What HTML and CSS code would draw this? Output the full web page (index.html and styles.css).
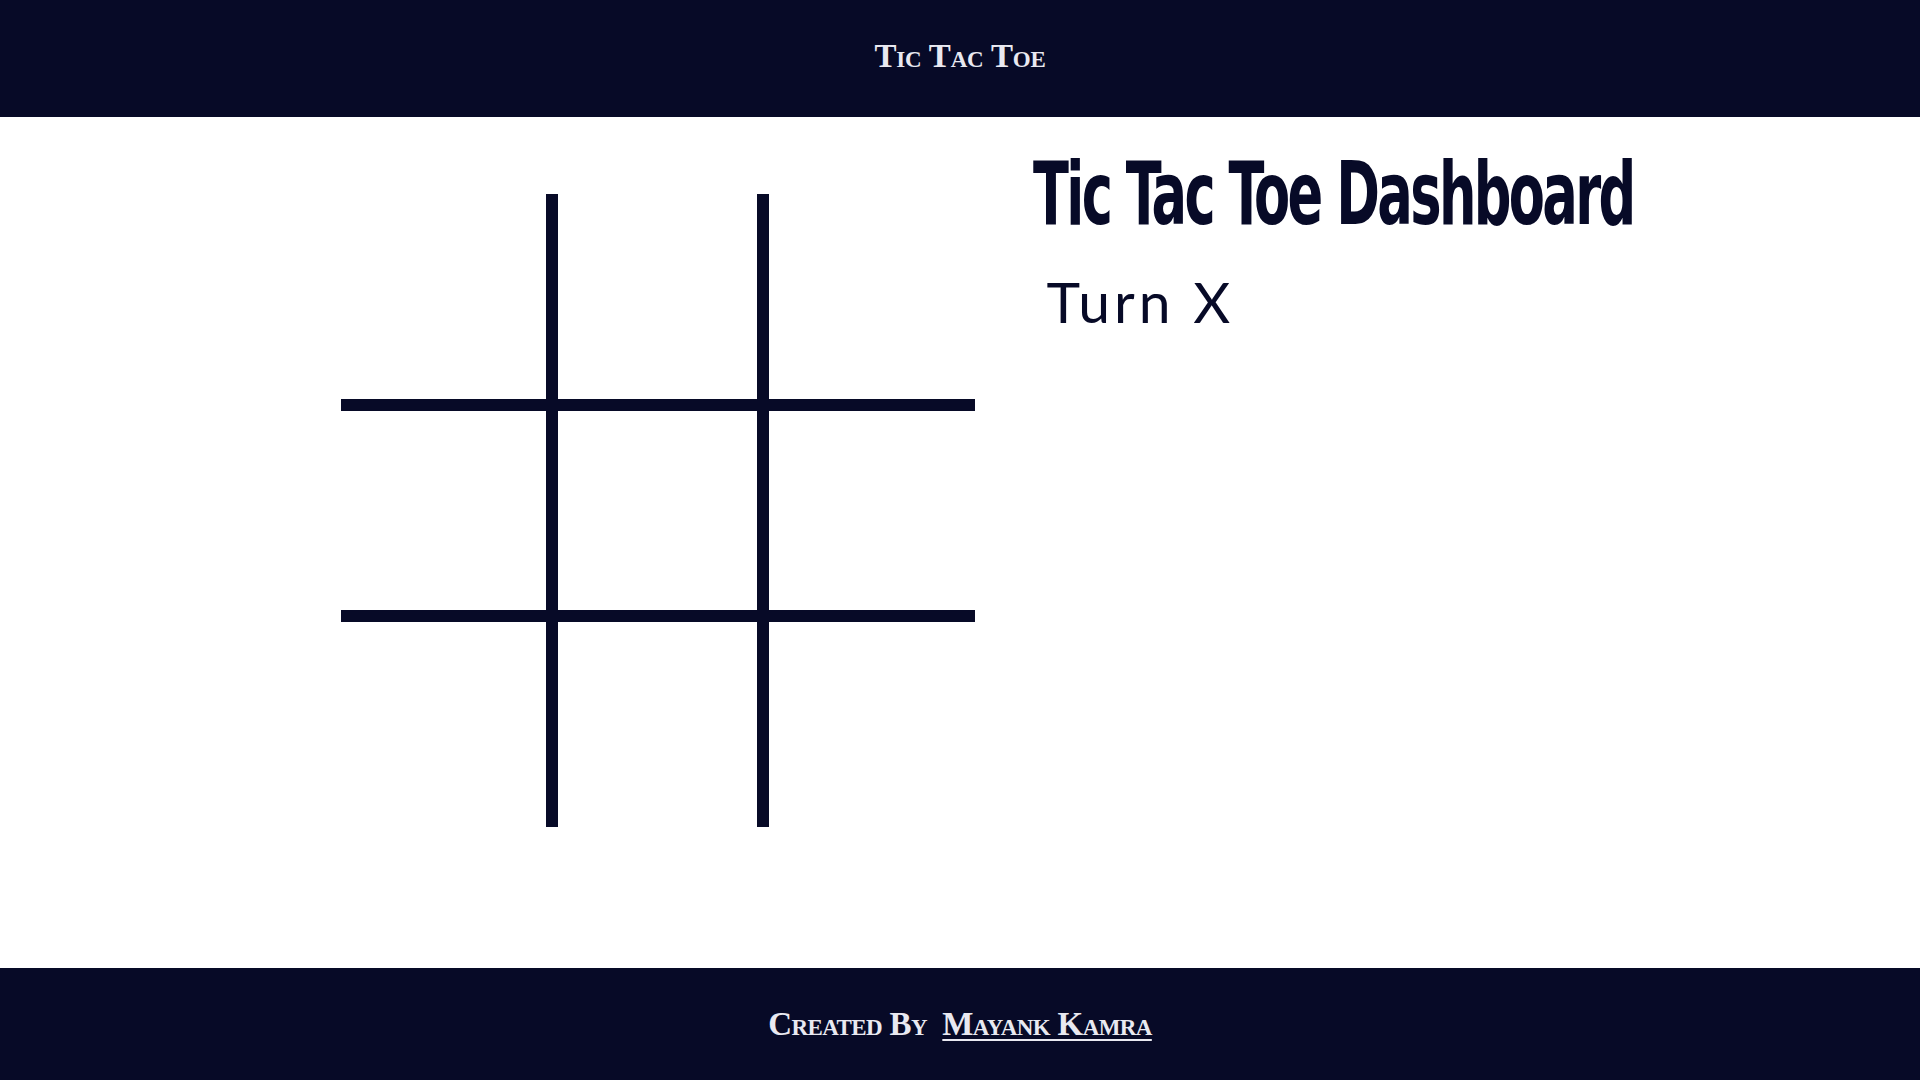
FILE: index.html
```html
<!DOCTYPE html>
<html lang="en">
<head>
<meta charset="utf-8">
<title>Tic Tac Toe</title>
<link rel="stylesheet" href="styles.css">
</head>
<body>
<header class="topbar"><span class="brand">Tic Tac Toe</span></header>
<main class="main">
  <div class="board">
    <div class="cell"></div><div class="cell"></div><div class="cell"></div>
    <div class="cell"></div><div class="cell"></div><div class="cell"></div>
    <div class="cell"></div><div class="cell"></div><div class="cell"></div>
  </div>
  <section class="dash">
    <h1 class="title">Tic Tac Toe Dashboard</h1>
    <p class="turn">Turn X</p>
  </section>
</main>
<footer class="footbar"><span class="credit">Created By&nbsp; <a class="author" href="#">Mayank Kamra</a></span></footer>
</body>
</html>
```
FILE: styles.css
```css
* { box-sizing: border-box; }
html, body { margin: 0; padding: 0; height: 100%; }
body {
  display: flex;
  flex-direction: column;
  background: #ffffff;
  color: #070a27;
  font-family: "Liberation Serif", serif;
}
.topbar {
  height: 117px;
  background: #070a27;
  display: flex;
  align-items: center;
  justify-content: center;
  padding-bottom: 4px;
}
.brand, .credit {
  color: #e9e9f1;
  font-family: "Liberation Serif", serif;
  font-variant: small-caps;
  font-size: 33px;
  font-weight: 600;
}
.brand { letter-spacing: -0.2px; }
.credit { letter-spacing: -0.6px; }
.main {
  flex: 1;
  display: flex;
  justify-content: center;
  align-items: flex-start;
  gap: 58px;
  padding-top: 33px;
}
.board {
  margin-top: 44px;
  display: grid;
  grid-template-columns: 205px 199px 206px;
  grid-template-rows: 205px 199px 205px;
  gap: 12px;
  background: #070a27;
}
.cell { background: #ffffff; }
.dash { width: 547px; }
.title {
  margin: 0;
  font-family: "DejaVu Sans Condensed", "DejaVu Sans", sans-serif;
  font-weight: bold;
  font-size: 88px;
  letter-spacing: -4px;
  line-height: 1;
  white-space: nowrap;
  display: inline-block;
  transform-origin: left top;
  transform: scaleX(0.665);
  color: #070a27;
}
.turn {
  margin: 35px 0 0 14px;
  font-family: "Lato", sans-serif;
  font-size: 57px;
  letter-spacing: 4px;
  line-height: 1;
  color: #070a27;
}
.footbar {
  height: 112px;
  background: #070a27;
  display: flex;
  align-items: center;
  justify-content: center;
}
.author { color: #e9e9f1; text-decoration: underline; text-decoration-thickness: 2px; text-underline-offset: 4px; }
```
